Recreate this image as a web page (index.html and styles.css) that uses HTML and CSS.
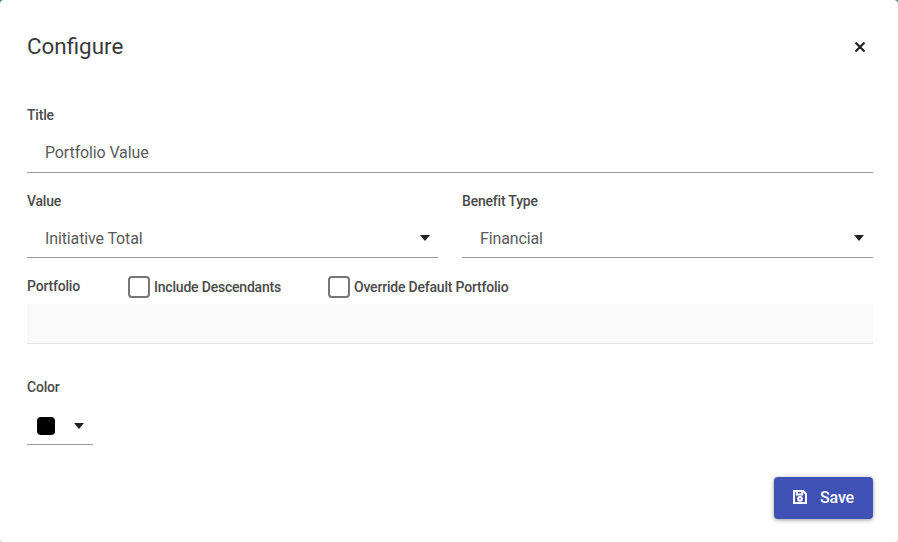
FILE: index.html
```html
<!DOCTYPE html>
<html>
<head>
    <meta charset="utf-8">
    <title>Configure</title>
    <link rel="stylesheet" href="styles.css">
</head>
<body>
<div class="dialog">
    <div class="dialogHead">
        <h2 class="dialogTitle">Configure</h2>
        <svg class="closeIcon" viewBox="0 0 12 12"><path d="M1.5 1.5L10.5 10.5M10.5 1.5L1.5 10.5"/></svg>
    </div>
    <div class="field titleField">
        <div class="label">Title</div>
        <div class="control">Portfolio Value</div>
    </div>
    <div class="fieldRow">
        <div class="field">
            <div class="label">Value</div>
            <div class="control selectControl">Initiative Total<span class="caret"></span></div>
        </div>
        <div class="field">
            <div class="label">Benefit Type</div>
            <div class="control selectControl">Financial<span class="caret"></span></div>
        </div>
    </div>
    <div class="checkRow">
        <div class="label portfolioLabel">Portfolio</div>
        <label class="check"><span class="box"></span>Include Descendants</label>
        <label class="check"><span class="box"></span>Override Default Portfolio</label>
    </div>
    <div class="portfolioBox"></div>
    <div class="label colorLabel">Color</div>
    <div class="colorPicker">
        <span class="swatch"></span>
        <span class="caret"></span>
    </div>
    <div class="dialogFoot">
        <button class="saveBtn">
            <svg class="saveIcon" viewBox="0 0 14 14"><path d="M1 1h9.2L13 3.8V13H1z"/><path d="M3.8 1.4v3h5.4v-3"/><circle cx="7" cy="8.8" r="1.9"/></svg>
            Save
        </button>
    </div>
</div>
</body>
</html>
```

FILE: styles.css
```css
html, body {
    margin: 0;
    height: 100%;
    background: linear-gradient(#26857f 50%, #d8d8d8 50%);
}
.dialog {
    box-sizing: border-box;
    width: 898px;
    height: 542px;
    padding: 0 25px 0 27px;
    background: #fff;
    border-radius: 4px;
    font-family: Roboto, sans-serif;
    color: #444;
    overflow: hidden;
}
.dialogHead {
    display: flex;
    justify-content: space-between;
    align-items: center;
    height: 92px;
    margin-bottom: 15px;
}
.dialogTitle {
    margin: 0;
    font-size: 22.4px;
    font-weight: 400;
    color: #3a3a3a;
}
.closeIcon {
    width: 12px;
    height: 12px;
    margin: 2px 7px 0 0;
    fill: none;
    stroke: #222;
    stroke-width: 2.2;
}
.label {
    font-size: 14px;
    font-weight: 500;
    line-height: 16px;
    letter-spacing: -.2px;
    color: #4a4a4a;
}
.field {
    flex: 1;
}
.control {
    display: flex;
    justify-content: space-between;
    align-items: center;
    height: 40px;
    margin-top: 9px;
    padding: 0 8px 0 18px;
    border-bottom: 1px solid #999;
    font-size: 16px;
    letter-spacing: -.13px;
    color: #5a5a5a;
}
.selectControl {
    height: 38px;
    margin-top: 10px;
}
.field + .field .control {
    padding-right: 9px;
}
.titleField {
    margin-bottom: 20px;
}
.fieldRow {
    display: flex;
    gap: 24px;
}
.caret {
    width: 0;
    height: 0;
    border-left: 5px solid transparent;
    border-right: 5px solid transparent;
    border-top: 6px solid #222;
}
.checkRow {
    box-sizing: border-box;
    display: flex;
    align-items: center;
    height: 46px;
    padding-top: 11px;
}
.portfolioLabel {
    width: 101px;
    margin-bottom: 2px;
}
.check {
    display: flex;
    align-items: center;
    gap: 4px;
    width: 200px;
    font-size: 14px;
    font-weight: 500;
    letter-spacing: -.2px;
    color: #4a4a4a;
}
.box {
    box-sizing: border-box;
    width: 22px;
    height: 22px;
    border: 2px solid #757575;
    border-radius: 4px;
}
.portfolioBox {
    height: 39px;
    background: #f9f9f9;
    border-bottom: 1px solid #e4e4e4;
}
.colorLabel {
    margin-top: 35px;
}
.colorPicker {
    display: flex;
    align-items: center;
    gap: 19px;
    box-sizing: border-box;
    width: 66px;
    height: 50px;
    padding: 12px 0 0 10px;
    border-bottom: 1px solid #999;
}
.swatch {
    width: 18px;
    height: 18px;
    background: #000;
    border-radius: 4px;
}
.dialogFoot {
    display: flex;
    justify-content: flex-end;
    margin-top: 32px;
}
.saveBtn {
    display: flex;
    align-items: center;
    justify-content: center;
    gap: 13px;
    width: 99px;
    height: 42px;
    padding: 0 0 2px;
    border: 0;
    border-radius: 4px;
    background: #3f51b5;
    color: #fff;
    font-family: Roboto, sans-serif;
    font-size: 16px;
    font-weight: 500;
    letter-spacing: -.1px;
    box-shadow: 0 1px 4px rgba(0, 0, 0, .4);
}
.saveIcon {
    width: 14px;
    height: 14px;
    fill: none;
    stroke: #fff;
    stroke-width: 2;
}
```
